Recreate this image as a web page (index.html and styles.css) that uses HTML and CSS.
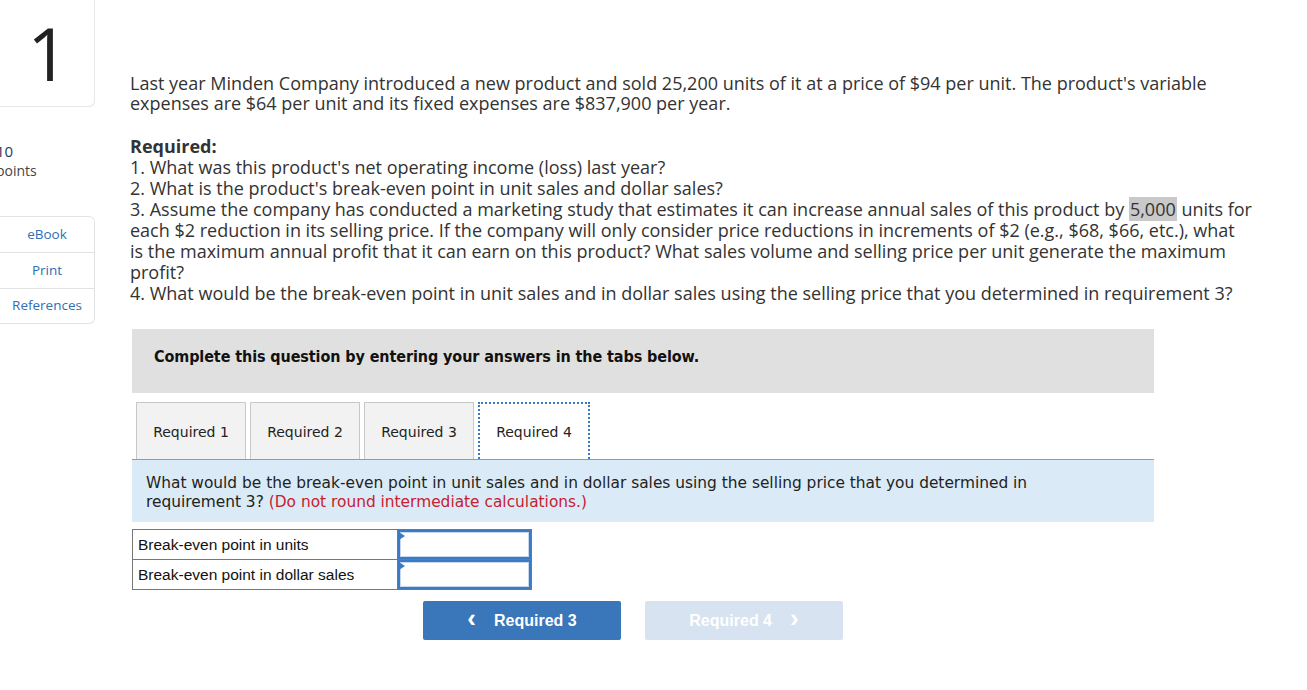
FILE: index.html
```html
<!DOCTYPE html>
<html>
<head>
<meta charset="utf-8">
<link rel="stylesheet" href="styles.css">
</head>
<body>
<div class="page">
  <aside class="side">
    <div class="qnum">1</div>
    <div class="pts"><div class="pts-n">10</div><div class="pts-l">points</div></div>
    <div class="links">
      <div class="link">eBook</div>
      <div class="link">Print</div>
      <div class="link">References</div>
    </div>
  </aside>
  <main class="main">
    <p class="intro">Last year Minden Company introduced a new product and sold 25,200 units of it at a price of $94 per unit. The product's variable expenses are $64 per unit and its fixed expenses are $837,900 per year.</p>
    <div class="req">
      <div class="req-h">Required:</div>
      <div>1. What was this product's net operating income (loss) last year?</div>
      <div>2. What is the product's break-even point in unit sales and dollar sales?</div>
      <div>3. Assume the company has conducted a marketing study that estimates it can increase annual sales of this product by <span class="hl">5,000</span> units for each $2 reduction in its selling price. If the company will only consider price reductions in increments of $2 (e.g., $68, $66, etc.), what<br>is the maximum annual profit that it can earn on this product? What sales volume and selling price per unit generate the maximum profit?</div>
      <div>4. What would be the break-even point in unit sales and in dollar sales using the selling price that you determined in requirement 3?</div>
    </div>
    <div class="banner">Complete this question by entering your answers in the tabs below.</div>
    <div class="tabs">
      <div class="tab">Required 1</div>
      <div class="tab">Required 2</div>
      <div class="tab">Required 3</div>
      <div class="tab active">Required 4</div>
    </div>
    <div class="prompt">What would be the break-even point in unit sales and in dollar sales using the selling price that you determined in requirement 3? <span class="red">(Do not round intermediate calculations.)</span></div>
    <table class="ans">
      <tr><td class="lbl">Break-even point in units</td><td class="inp"><div class="box"></div></td></tr>
      <tr><td class="lbl">Break-even point in dollar sales</td><td class="inp"><div class="box"></div></td></tr>
    </table>
    <div class="nav">
      <div class="btn prev"><span class="chev">&lsaquo;</span>Required 3</div>
      <div class="btn next">Required 4<span class="chev r">&rsaquo;</span></div>
    </div>
  </main>
</div>
</body>
</html>
```

FILE: styles.css
```css
html, body { margin: 0; padding: 0; background: #fff; }
body { overflow: hidden; }
.page { display: flex; align-items: flex-start; }
.side { width: 95px; flex: none; font-family: "Open Sans", sans-serif; }
.qnum {
  height: 107px; border: 1px solid #e6e6e6; border-top: none; border-left: none;
  border-bottom-right-radius: 6px; box-sizing: border-box;
  font-family: "Open Sans", sans-serif; font-size: 73px; color: #222;
  text-align: center; line-height: 106px; padding-left: 2px;
}
.pts { margin-top: 34px; margin-left: -4px; color: #444; font-size: 14px; line-height: 20px; }
.pts-n { color: #2c3a55; font-size: 15px; }
.links {
  margin-top: 35px; border: 1px solid #e3e3e3; border-left: none;
  border-radius: 0 6px 6px 0;
}
.link {
  text-align: center; color: #2f6fb6; font-size: 13.5px; height: 35px; line-height: 35px;
  border-bottom: 1px solid #e3e3e3;
}
.link:last-child { border-bottom: none; height: 34px; line-height: 32px; }
.main { margin-left: 35px; width: 1128px; font-family: "Open Sans", sans-serif; color: #333; }
.intro { margin: 73px 0 0; font-size: 18px; line-height: 20px; }
.req { margin-top: 23px; font-size: 18px; line-height: 21px; }
.req-h { font-weight: bold; }
.hl { background: #c9c9c9; padding: 0 1px; }
.banner {
  margin-top: 25px; margin-left: 2px; width: 1022px; height: 64px; box-sizing: border-box; letter-spacing: -0.1px;
  background: #e0e0e0; font-family: "DejaVu Sans Condensed", "DejaVu Sans", sans-serif; font-weight: bold;
  font-size: 16px; color: #111; padding: 18px 22px 16px; line-height: 20px;
}
.tabs { display: flex; gap: 4px; margin-top: 9px; margin-left: 6px; height: 57px; }
.tab {
  width: 110px; box-sizing: border-box; background: #f2f2f2; border: 1px solid #c8c8c8; border-bottom: none;
  font-family: "DejaVu Sans", sans-serif; font-size: 14px; color: #222; text-align: center; line-height: 59px;
}
.tab.active { background: #fff; width: 112px; border: 2px dotted #3c78c2; border-bottom: none; line-height: 57px; }
.prompt {
  margin-left: 2px; width: 1022px; box-sizing: border-box; background: #dbeaf7; border-top: 1px solid #999;
  font-family: "DejaVu Sans", sans-serif; font-size: 15.4px; line-height: 19px; color: #222; padding: 14px 60px 10px 14px;
}
.red { color: #c8202f; }
.ans { margin-top: 7px; margin-left: 2px; border-collapse: collapse; font-family: "Liberation Sans", Arial, sans-serif; font-size: 15.5px; color: #111; }
.ans td { border: 1px solid #777; height: 29px; padding: 0; }
.lbl { width: 259px; padding-left: 5px !important; }
.inp { width: 133px; position: relative; }
.box { border: 2px solid #3d7ac6; box-sizing: border-box; box-shadow: inset 0 0 0 1px #c5d8ee; height: 29px; }
.inp::before {
  content: ""; position: absolute; left: 1px; top: 2px; border-left: 6px solid #3d7ac6;
  border-top: 4px solid transparent; border-bottom: 4px solid transparent;
}
.nav { display: flex; gap: 24px; margin-top: 11px; margin-left: 293px; }
.btn {
  width: 198px; height: 39px; border-radius: 2px; color: #fff; font-family: "Liberation Sans", Arial, sans-serif;
  font-weight: bold; font-size: 16px; display: flex; align-items: center; justify-content: center;
}
.prev { background: #3a76ba; }
.next { background: #d7e3f0; }
.chev { font-size: 26px; margin-right: 18px; margin-top: -4px; font-weight: bold; }
.chev.r { margin-right: 0; margin-left: 18px; }
```
